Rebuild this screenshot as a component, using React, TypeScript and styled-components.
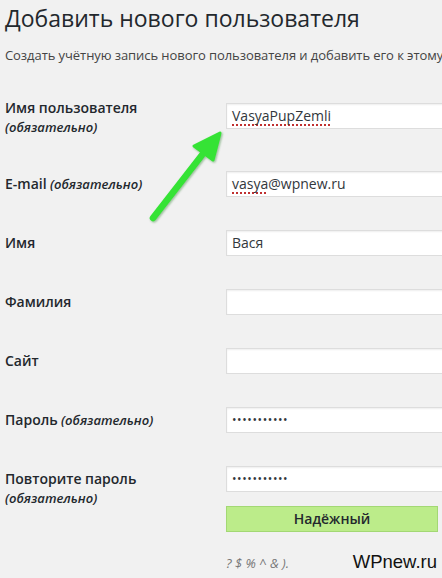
import styled, { createGlobalStyle } from "styled-components";

const GlobalStyle = createGlobalStyle`
  html, body {
    margin: 0;
    padding: 0;
    background: #f1f1f1;
    overflow: hidden;
  }
  body {
    width: 442px;
    height: 578px;
    font-family: "Open Sans", "Noto Sans", sans-serif;
    color: #23282d;
  }
`;

type FieldRow = {
  label: string;
  note?: "inline" | "below";
  value?: string;
  typo?: string;
  password?: boolean;
  first?: boolean;
  meter?: boolean;
};

const rows: FieldRow[] = [
  { label: "Имя пользователя", note: "below", value: "VasyaPupZemli", typo: "VasyaPupZemli", first: true },
  { label: "E-mail", note: "inline", value: "@wpnew.ru", typo: "vasya" },
  { label: "Имя", value: "Вася" },
  { label: "Фамилия" },
  { label: "Сайт" },
  { label: "Пароль", note: "inline", value: "•••••••••••", password: true },
  { label: "Повторите пароль", note: "below", value: "•••••••••••", password: true, meter: true },
];

export default function App() {
  return (
    <Page>
      <GlobalStyle />
      <Title>Добавить нового пользователя</Title>
      <Description>
        Создать учётную запись нового пользователя и добавить его к этому
      </Description>

      <Form>
        {rows.map((row) => (
          <Row key={row.label}>
            <Label $first={row.first}>
              {row.label}
              {row.note === "inline" && <Required> (обязательно)</Required>}
              {row.note === "below" && (
                <>
                  <br />
                  <Required>(обязательно)</Required>
                </>
              )}
            </Label>
            <Cell>
              <Input $password={row.password}>
                {row.typo && <Misspelled>{row.typo}</Misspelled>}
                {row.typo !== row.value && row.value}
              </Input>
              {row.meter && (
                <>
                  <Meter>Надёжный</Meter>
                  <Hint>? $ % ^ &amp; ).</Hint>
                </>
              )}
            </Cell>
          </Row>
        ))}
      </Form>

      <Arrow width="90" height="100" viewBox="0 0 90 100">
        <defs>
          <filter id="glow" x="-30%" y="-30%" width="160%" height="160%">
            <feDropShadow dx="1" dy="1" stdDeviation="1.2" floodColor="#1a6b1a" floodOpacity="0.45" />
          </filter>
        </defs>
        <g filter="url(#glow)">
          <line x1="13" y1="88" x2="62" y2="25" stroke="#35e335" strokeWidth="6.5" strokeLinecap="round" />
          <polygon points="80,3 54,16 73,30" fill="#35e335" stroke="#35e335" strokeWidth="3" strokeLinejoin="round" />
        </g>
      </Arrow>

      <Watermark>WPnew.ru</Watermark>
    </Page>
  );
}

const Page = styled.div`
  position: relative;
  width: 442px;
  height: 578px;
  padding-left: 5px;
  box-sizing: border-box;
  overflow: hidden;
`;

const Title = styled.h1`
  margin: 0;
  padding-top: 4px;
  font-size: 23px;
  line-height: 29px;
  font-weight: 400;
  white-space: nowrap;
  color: #23282d;
`;

const Description = styled.p`
  margin: 12px 0 0;
  font-size: 13px;
  line-height: 20px;
  letter-spacing: -0.07px;
  white-space: nowrap;
  color: #444;
`;

const Form = styled.div`
  margin-top: 22px;
`;

const Row = styled.div`
  display: grid;
  grid-template-columns: 221px 1fr;
  padding: 16px 0 17px;

  &:first-child {
    padding-bottom: 18px;
  }
`;

const Label = styled.div<{ $first?: boolean }>`
  padding-top: 3px;
  margin-top: ${(p) => (p.$first ? "-8px" : "0")};
  font-size: 14px;
  line-height: 19px;
  font-weight: 600;
  color: #23282d;
  white-space: nowrap;
`;

const Required = styled.span`
  font-size: 13px;
  font-style: italic;
  font-weight: 600;
`;

const Cell = styled.div`
  display: flex;
  flex-direction: column;
`;

const Input = styled.div<{ $password?: boolean }>`
  width: 240px;
  height: 26px;
  box-sizing: border-box;
  padding: 0 5px;
  background: #fff;
  border: 1px solid #ddd;
  box-shadow: inset 0 1px 2px rgba(0, 0, 0, 0.07);
  font-size: ${(p) => (p.$password ? "12px" : "14px")};
  letter-spacing: ${(p) => (p.$password ? "0.6px" : "0")};
  line-height: 24px;
  color: #32373c;
  white-space: nowrap;
`;

const Misspelled = styled.span`
  text-decoration: underline dotted #c03030;
  text-underline-offset: 3px;
  text-decoration-thickness: 1.5px;
`;

const Meter = styled.div`
  width: 212px;
  height: 26px;
  margin-top: 14px;
  box-sizing: border-box;
  background: #bcec8a;
  border: 1px solid #a3d874;
  text-align: center;
  font-size: 14px;
  font-weight: 600;
  line-height: 24px;
  color: #23282d;
`;

const Hint = styled.div`
  margin-top: 21px;
  font-size: 13px;
  line-height: 20px;
  font-style: italic;
  color: #777;
`;

const Arrow = styled.svg`
  position: absolute;
  left: 140px;
  top: 130px;
`;

const Watermark = styled.div`
  position: absolute;
  right: 5px;
  top: 550px;
  font-family: "Liberation Sans", Arial, sans-serif;
  font-size: 18.5px;
  line-height: 24px;
  color: #111;
`;
